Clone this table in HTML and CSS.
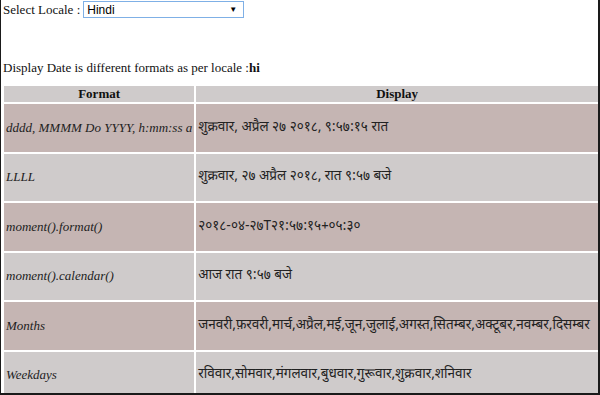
FILE: index.html
```html
<!DOCTYPE html>
<html>
<head>
<meta charset="utf-8">
<link rel="stylesheet" href="styles.css">
</head>
<body>
<div class="frame">
  <div class="locale-row">
    <span class="label">Select Locale :</span>
    <div class="select"><span>Hindi</span><span class="arrow">&#9660;</span></div>
  </div>
  <div class="caption">Display Date is different formats as per locale :<b>hi</b></div>
  <table class="dates">
    <tr class="head"><th class="c1">Format</th><th class="c2">Display</th></tr>
    <tr class="dark"><td class="fmt">dddd, MMMM Do YYYY, h:mm:ss a</td><td class="val">शुक्रवार, अप्रैल २७ २०१८, ९:५७:१५ रात</td></tr>
    <tr class="light"><td class="fmt">LLLL</td><td class="val">शुक्रवार, २७ अप्रैल २०१८, रात ९:५७ बजे</td></tr>
    <tr class="dark"><td class="fmt">moment().format()</td><td class="val">२०१८-०४-२७T२१:५७:१५+०५:३०</td></tr>
    <tr class="light"><td class="fmt">moment().calendar()</td><td class="val">आज रात ९:५७ बजे</td></tr>
    <tr class="dark"><td class="fmt">Months</td><td class="val">जनवरी,फ़रवरी,मार्च,अप्रैल,मई,जून,जुलाई,अगस्त,सितम्बर,अक्टूबर,नवम्बर,दिसम्बर</td></tr>
    <tr class="light"><td class="fmt">Weekdays</td><td class="val">रविवार,सोमवार,मंगलवार,बुधवार,गुरूवार,शुक्रवार,शनिवार</td></tr>
  </table>
</div>
</body>
</html>
```
FILE: styles.css
```css
html, body { margin: 0; padding: 0; background: #fff; }
.frame {
  width: 600px; height: 395px; box-sizing: border-box;
  border-left: 1px solid #1a1a1a; border-right: 2px solid #1a1a1a; border-bottom: 2px solid #1a1a1a;
  overflow: hidden; padding: 1px 0 0 2px;
  font-family: "Liberation Serif", serif; color: #111;
}
.locale-row { display: flex; align-items: center; height: 17px; }
.label { font-size: 13px; margin-right: 3px; }
.select {
  width: 161px; height: 17px; box-sizing: border-box; border: 1px solid #7fb0e6;
  display: flex; align-items: center; justify-content: space-between; padding: 0 6px 0 3px;
  font-family: "Liberation Sans", sans-serif; font-size: 12px; color: #000;
}
.arrow { font-size: 8px; }
.caption { font-size: 13px; margin-top: 42px; }
.caption b { font-weight: bold; }
.dates { border-spacing: 2px; margin-top: 8px; width: 598px; margin-left: -1px; }
.dates th { background: #cfcbcb; font-size: 13px; font-weight: bold; height: 16px; padding: 0; }
.c1 { width: 189px; }
.dates td { height: 47.5px; padding: 0 2px; color: #222; }
.dark td { background: #c5b5b3; }
.light td { background: #cfcbcb; }
.fmt { font-style: italic; font-size: 13px; white-space: nowrap; }
.val { font-family: "Noto Sans Devanagari", "Lohit Devanagari", "Noto Sans", sans-serif; font-size: 13.5px; white-space: nowrap; }
```
